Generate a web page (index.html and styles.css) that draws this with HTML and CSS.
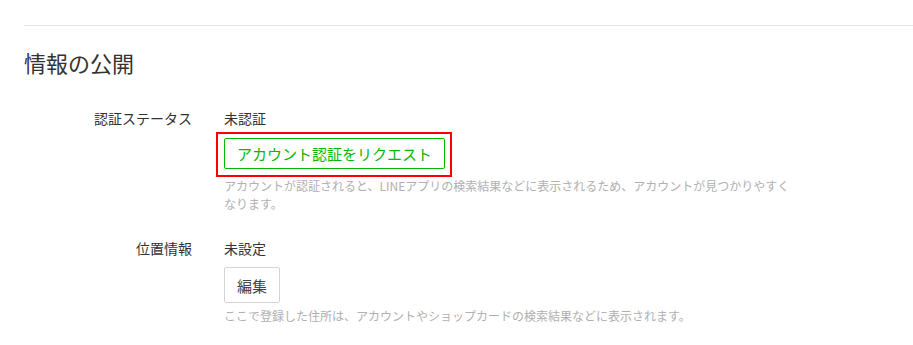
FILE: index.html
```html
<!DOCTYPE html>
<html lang="ja">
<head>
  <meta charset="UTF-8">
  <meta name="viewport" content="width=device-width, initial-scale=1.0">
  <title>情報の公開</title>
  <link rel="stylesheet" href="styles.css">
</head>
<body>
  <div class="section">
    <h2 class="section-title">情報の公開</h2>

    <div class="field-row">
      <div class="field-label">認証ステータス</div>
      <div class="field-body">
        <div class="field-value">未認証</div>
        <div class="field-action">
          <button class="btn btn-green highlight">アカウント認証をリクエスト</button>
        </div>
        <p class="field-help wide">アカウントが認証されると、LINEアプリの検索結果などに表示されるため、アカウントが見つかりやすくなります。</p>
      </div>
    </div>

    <div class="field-row second">
      <div class="field-label">位置情報</div>
      <div class="field-body">
        <div class="field-value">未設定</div>
        <div class="field-action tight">
          <button class="btn btn-plain">編集</button>
        </div>
        <p class="field-help">ここで登録した住所は、アカウントやショップカードの検索結果などに表示されます。</p>
      </div>
    </div>
  </div>
</body>
</html>
```

FILE: styles.css
```css
body {
  margin: 0;
  padding-top: 25px;
  background: #fff;
  color: #333;
  font-family: "Noto Sans CJK JP", "Noto Sans", sans-serif;
}
.section {
  margin-left: 24px;
  border-top: 1px solid #e6e6e6;
}
.section-title {
  margin: 21px 0 0;
  font-size: 22px;
  line-height: 30px;
  font-weight: 400;
  color: #333;
}
.field-row {
  display: grid;
  grid-template-columns: 168px 1fr;
  column-gap: 32px;
  margin-top: 31px;
}
.field-row.second { margin-top: 25px; }
.field-label {
  text-align: right;
  font-size: 14px;
  line-height: 20px;
  color: #333;
}
.field-value {
  font-size: 14px;
  line-height: 20px;
  color: #333;
}
.field-action { margin-top: 10px; }
.field-action.tight { margin-top: 9px; }
.field-help {
  margin: 8px 0 0;
  font-size: 12px;
  line-height: 18px;
  color: #b0b0b0;
}
.field-action.tight + .field-help { margin-top: 4px; }
.field-help.wide { max-width: 570px; }
.btn {
  display: block;
  font-family: inherit;
  font-size: 15px;
  line-height: 21px;
  background: #fff;
  border-radius: 2px;
  cursor: pointer;
}
.btn-green {
  padding: 4px 12px;
  border: 1px solid #00b900;
  color: #00b900;
}
.btn-plain {
  padding: 7px 12px 6px;
  line-height: 21px;
  border: 1px solid #d4d4d4;
  color: #444;
}
.highlight { position: relative; }
.highlight::after {
  content: "";
  position: absolute;
  top: -7px;
  left: -9px;
  right: -8px;
  bottom: -9px;
  border: 2px solid #f00;
  pointer-events: none;
}
```
